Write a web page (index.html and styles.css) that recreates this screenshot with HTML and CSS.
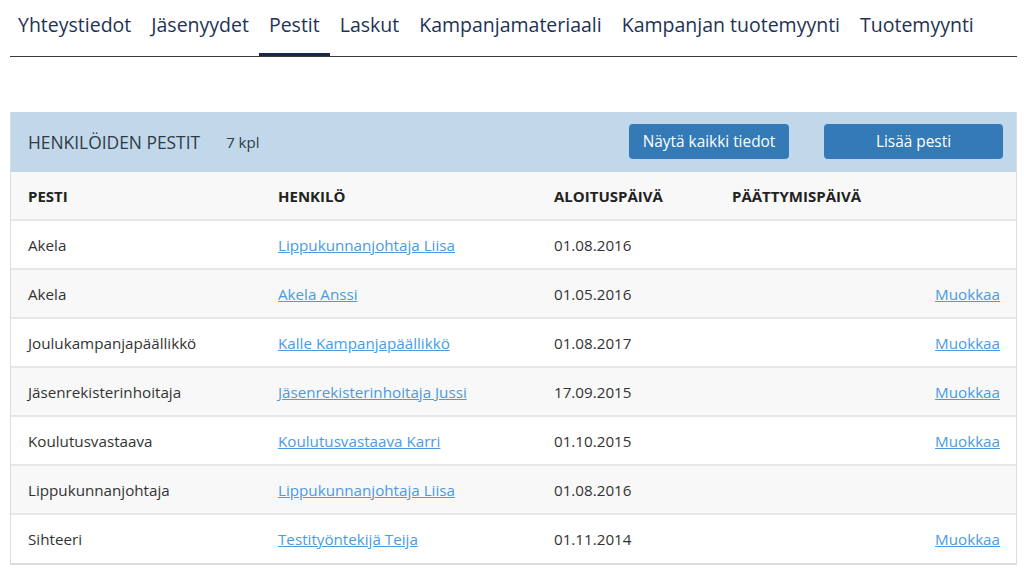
FILE: index.html
```html
<!DOCTYPE html>
<html lang="fi">
<head>
<meta charset="utf-8">
<title>Pestit</title>
<link rel="stylesheet" href="styles.css">
</head>
<body>
<nav class="tabs">
  <ul class="tab-list">
    <li><a class="tab" href="#">Yhteystiedot</a></li>
    <li><a class="tab" href="#">Jäsenyydet</a></li>
    <li><a class="tab active" href="#">Pestit</a></li>
    <li><a class="tab" href="#">Laskut</a></li>
    <li><a class="tab" href="#">Kampanjamateriaali</a></li>
    <li><a class="tab" href="#">Kampanjan tuotemyynti</a></li>
    <li><a class="tab" href="#">Tuotemyynti</a></li>
  </ul>
</nav>

<section class="panel">
  <header class="panel-head">
    <h2 class="panel-title">HENKILÖIDEN PESTIT</h2>
    <span class="panel-count">7 kpl</span>
    <div class="panel-actions">
      <button class="btn btn-wide">Näytä kaikki tiedot</button>
      <button class="btn btn-wider">Lisää pesti</button>
    </div>
  </header>
  <table class="grid">
    <colgroup>
      <col class="c1"><col class="c2"><col class="c3"><col class="c4"><col class="c5">
    </colgroup>
    <thead>
      <tr><th>PESTI</th><th>HENKILÖ</th><th>ALOITUSPÄIVÄ</th><th>PÄÄTTYMISPÄIVÄ</th><th></th></tr>
    </thead>
    <tbody>
      <tr><td>Akela</td><td><a href="#">Lippukunnanjohtaja Liisa</a></td><td>01.08.2016</td><td></td><td class="act"></td></tr>
      <tr><td>Akela</td><td><a href="#">Akela Anssi</a></td><td>01.05.2016</td><td></td><td class="act"><a href="#">Muokkaa</a></td></tr>
      <tr><td>Joulukampanjapäällikkö</td><td><a href="#">Kalle Kampanjapäällikkö</a></td><td>01.08.2017</td><td></td><td class="act"><a href="#">Muokkaa</a></td></tr>
      <tr><td>Jäsenrekisterinhoitaja</td><td><a href="#">Jäsenrekisterinhoitaja Jussi</a></td><td>17.09.2015</td><td></td><td class="act"><a href="#">Muokkaa</a></td></tr>
      <tr><td>Koulutusvastaava</td><td><a href="#">Koulutusvastaava Karri</a></td><td>01.10.2015</td><td></td><td class="act"><a href="#">Muokkaa</a></td></tr>
      <tr><td>Lippukunnanjohtaja</td><td><a href="#">Lippukunnanjohtaja Liisa</a></td><td>01.08.2016</td><td></td><td class="act"></td></tr>
      <tr><td>Sihteeri</td><td><a href="#">Testityöntekijä Teija</a></td><td>01.11.2014</td><td></td><td class="act"><a href="#">Muokkaa</a></td></tr>
    </tbody>
  </table>
</section>
</body>
</html>
```

FILE: styles.css
```css
* { box-sizing: border-box; }

html, body {
  margin: 0;
  padding: 0;
  background: #ffffff;
}

body {
  font-family: "Open Sans", "Noto Sans", "Liberation Sans", sans-serif;
  color: #333333;
}

.tabs {
  margin: 0 7px 0 10px;
  border-bottom: 1px solid #3a3a3a;
}

.tab-list {
  list-style: none;
  margin: 0 0 0 -2px;
  padding: 0;
  display: flex;
}

.tab {
  display: block;
  padding: 11px 10px 15px;
  line-height: 27px;
  font-size: 19.5px;
  color: #1e3354;
  text-decoration: none;
  border-bottom: 3px solid transparent;
}

.tab.active {
  border-bottom-color: #172a4d;
}

.panel {
  margin: 55px 7px 0 10px;
  border: 1px solid #dddddd;
  border-top: 0;
}

.panel-head {
  height: 60px;
  background: #c1d8eb;
  display: flex;
  align-items: center;
  padding: 0 13px 0 17px;
}

.panel-title {
  margin: 0;
  font-size: 17.4px;
  font-weight: 400;
  color: #2f3a44;
}

.panel-count {
  margin-left: 26px;
  font-size: 15px;
  color: #2f3a44;
}

.panel-actions {
  margin-left: auto;
  display: flex;
  gap: 35px;
}

.btn {
  height: 35px;
  border: 0;
  border-radius: 4px;
  background: #337ab7;
  color: #ffffff;
  font-family: inherit;
  font-size: 15.4px;
  padding: 0;
  margin-top: -1px;
}

.btn-wide { width: 160px; }
.btn-wider { width: 179px; }

.grid {
  width: 100%;
  border-collapse: collapse;
  table-layout: fixed;
  font-size: 15.2px;
}

.c1 { width: 250px; }
.c2 { width: 276px; }
.c3 { width: 178px; }
.c4 { width: 178px; }

.grid th {
  height: 48px;
  text-align: left;
  font-size: 15px;
  font-weight: 700;
  color: #222222;
  background: #f8f8f8;
  padding: 0 0 0 17px;
  border-bottom: 2px solid #e7e7e7;
}

.grid td {
  height: 49px;
  padding: 0 0 0 17px;
  color: #333333;
  border-bottom: 2px solid #e7e7e7;
  white-space: nowrap;
}

.grid tbody tr:nth-child(even) td {
  background: #f8f8f8;
}

.grid tbody tr:last-child td {
  border-bottom: 1px solid #dddddd;
}

.grid a {
  color: #4a9be2;
  text-decoration: underline;
}

.grid td.act {
  text-align: right;
  padding: 0 16px 0 0;
}
```
